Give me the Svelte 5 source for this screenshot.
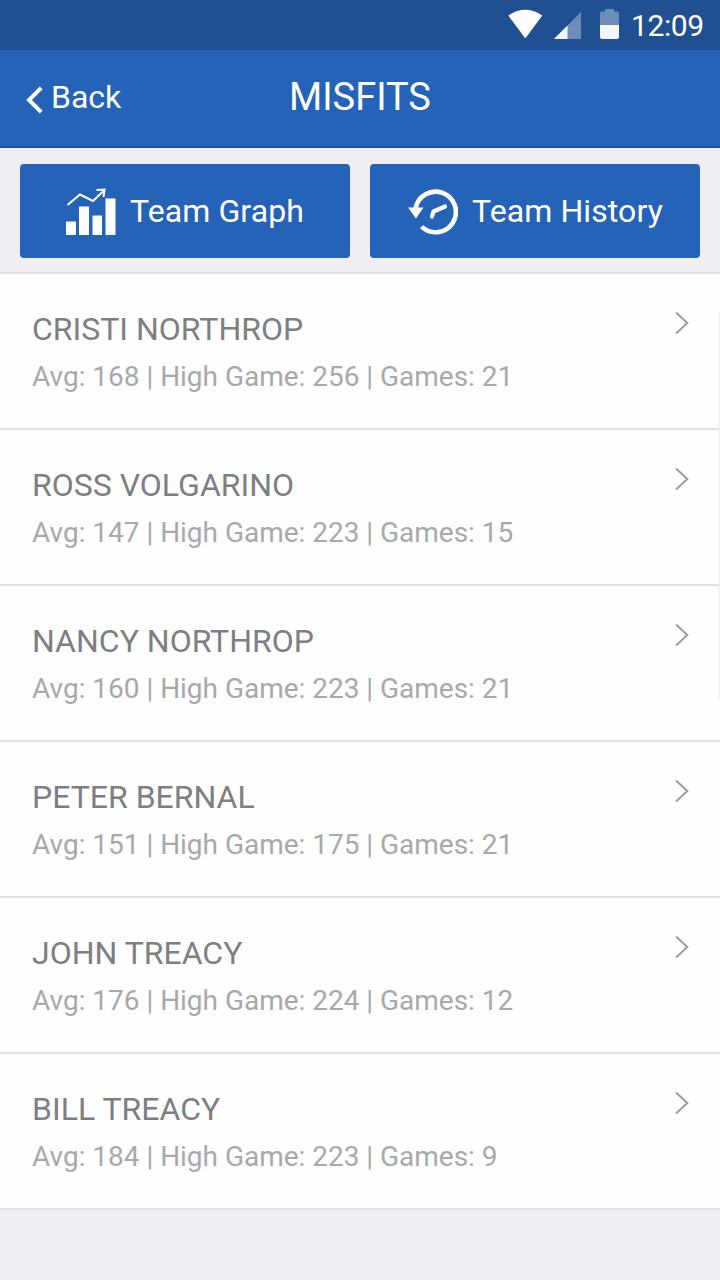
<script>
  const title = 'MISFITS';

  const players = [
    { name: 'CRISTI NORTHROP', avg: 168, high: 256, games: 21 },
    { name: 'ROSS VOLGARINO', avg: 147, high: 223, games: 15 },
    { name: 'NANCY NORTHROP', avg: 160, high: 223, games: 21 },
    { name: 'PETER BERNAL', avg: 151, high: 175, games: 21 },
    { name: 'JOHN TREACY', avg: 176, high: 224, games: 12 },
    { name: 'BILL TREACY', avg: 184, high: 223, games: 9 }
  ];
</script>

<div class="screen">
  <div class="status-bar">
    <svg class="wifi" width="35" height="29" viewBox="0 0 35 29">
      <path d="M0.300 6.500Q17.300 -5 34.300 6.500L17.300 29.500Z" fill="#fff" />
    </svg>
    <svg class="signal" width="27" height="27" viewBox="0 0 27 27">
      <path d="M0 27L27 0V27Z" fill="#6c8db9" />
      <path d="M0 27L13.5 13.5V27Z" fill="#f4f7fb" />
    </svg>
    <svg class="battery" width="19" height="30" viewBox="0 0 19 30">
      <path d="M5 0H14V2.500H17.500Q19 2.500 19 4V16H0V4Q0 2.500 1.500 2.500H5Z" fill="#6c8db9" />
      <path d="M0 16H19V28Q19 30 17 30H2Q0 30 0 28Z" fill="#f4f7fb" />
    </svg>
    <span class="time">12:09</span>
  </div>

  <header class="nav-bar">
    <button class="back">
      <svg width="17" height="28" viewBox="0 0 17 28">
        <path d="M15.200 1.800L3 14L15.200 26.200" fill="none" stroke="#fff" stroke-width="4" />
      </svg>
      <span>Back</span>
    </button>
    <h1>{title}</h1>
  </header>

  <div class="actions">
    <button class="action">
      <svg class="graph-icon" width="50" height="48" viewBox="0 0 50 48">
        <path d="M0 33.500H10V47H0ZM13 18.500H23V47H13ZM26.500 27.500H36V47H26.500ZM39.500 10.500H49.500V47H39.500Z" fill="#fff" />
        <path d="M1.500 17L14 6.500L27 13L38 2.500M30.500 2L38.500 1.500L37.500 9" fill="none" stroke="#fff" stroke-width="2" />
      </svg>
      <span>Team Graph</span>
    </button>
    <button class="action">
      <svg class="history-icon" width="50" height="46" viewBox="0 0 50 46">
        <path d="M7.500 20A20.300 20.300 0 1 1 13.600 37.700" fill="none" stroke="#fff" stroke-width="4.600" />
        <path d="M0 18.500H15.500L8 29.500Z" fill="#fff" />
        <path d="M24 27.500L25.500 22.500L37 17.500" fill="none" stroke="#fff" stroke-width="4.200" stroke-linecap="round" stroke-linejoin="round" />
      </svg>
      <span>Team History</span>
    </button>
  </div>

  <div class="player-list">
    {#each players as player}
      <div class="player">
        <div class="info">
          <div class="name">{player.name}</div>
          <div class="stats">Avg: {player.avg} | High Game: {player.high} | Games: {player.games}</div>
        </div>
        <svg class="chevron" width="14" height="24" viewBox="0 0 14 24">
          <path d="M1 1.500L12.300 12L1 22.500" fill="none" stroke="#9c9c9f" stroke-width="2" />
        </svg>
      </div>
    {/each}
    <div class="scroll-thumb"></div>
  </div>
</div>

<style>
  :global(body) {
    margin: 0;
    background: #efeef3;
  }

  .screen {
    display: flex;
    flex-direction: column;
    height: 1280px;
    overflow: hidden;
    background: #efeef3;
    font-family: Roboto, 'Liberation Sans', sans-serif;
  }

  button {
    border: none;
    padding: 0;
    background: none;
    color: #fff;
    font-family: inherit;
    font-size: 32px;
    cursor: pointer;
  }

  .status-bar {
    display: flex;
    box-sizing: border-box;
    height: 50px;
    padding: 9px 0 0 508px;
    background: #205092;
    color: #fff;
  }

  .signal {
    margin: 3px 0 0 11px;
  }

  .battery {
    margin-left: 19px;
  }

  .time {
    margin-left: 12px;
    font-size: 30px;
    line-height: 34px;
    letter-spacing: -0.4px;
    white-space: nowrap;
  }

  .nav-bar {
    display: grid;
    grid-template-columns: 1fr auto 1fr;
    box-sizing: border-box;
    height: 98px;
    background: #2563b9;
    border-bottom: 2px solid #1c529f;
  }

  .back {
    display: flex;
    align-items: flex-start;
    padding: 28px 0 0 26px;
    line-height: 38px;
  }

  .back svg {
    margin: 8px 8px 0 0;
  }

  h1 {
    margin: 24px 0 0;
    color: #fff;
    font-size: 38px;
    font-weight: 400;
    line-height: 46px;
  }

  .actions {
    display: grid;
    grid-template-columns: 1fr 1fr;
    gap: 20px;
    box-sizing: border-box;
    height: 126px;
    padding: 16px 20px 14px;
    border-bottom: 2px solid #e2e1e6;
  }

  .action {
    display: flex;
    align-items: flex-start;
    height: 94px;
    border-radius: 4px;
    background: #2563b9;
    line-height: 38px;
    letter-spacing: 0.1px;
  }

  .action span {
    margin-top: 28px;
  }

  .graph-icon {
    margin: 24px 14px 0 46px;
  }

  .history-icon {
    margin: 25px 14px 0 38px;
  }

  .player-list {
    position: relative;
  }

  .player {
    display: flex;
    justify-content: space-between;
    box-sizing: border-box;
    height: 156px;
    padding: 31px 31px 0 32px;
    background: #fefefe;
    border-bottom: 2px solid #e2e1e6;
  }

  .name {
    color: #7f7f82;
    font-size: 32px;
    line-height: 48px;
  }

  .stats {
    color: #a9a9ac;
    font-size: 28px;
    line-height: 48px;
    letter-spacing: -0.02px;
  }

  .chevron {
    margin-top: 6px;
  }

  /* fading scroll indicator on the right edge */
  .scroll-thumb {
    position: absolute;
    top: 38px;
    right: 0;
    width: 1px;
    height: 388px;
    background: #efeef0;
  }
</style>
